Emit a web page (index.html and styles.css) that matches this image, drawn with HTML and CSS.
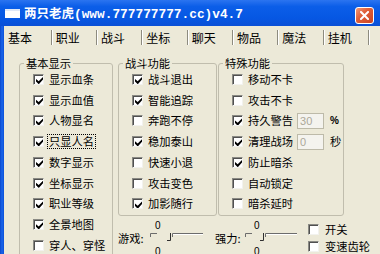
FILE: index.html
```html
<!DOCTYPE html>
<html>
<head>
<meta charset="utf-8">
<link rel="stylesheet" href="styles.css">
</head>
<body>
<div class="window">
  <div class="titlebar">
    <span class="appicon"></span>
    <span class="title"><span class="cjk">两只老虎</span>(www.777777777.cc)v4.7</span>
    <span class="close"><svg width="9" height="9" viewBox="0 0 9 9"><path d="M1 1L8 8M8 1L1 8" stroke="#fff" stroke-width="2" stroke-linecap="square"/></svg></span>
  </div>
  <div class="frame">
    <div class="edge"></div>
    <div class="client">
      <div class="tabs">
        <div class="tab active">基本</div>
        <div class="tab">职业</div>
        <div class="tab">战斗</div>
        <div class="tab">坐标</div>
        <div class="tab">聊天</div>
        <div class="tab">物品</div>
        <div class="tab">魔法</div>
        <div class="tab">挂机</div>
      </div>
      <div class="panel">
        <fieldset class="group g1">
          <legend>基本显示</legend>
          <div class="rows">
            <div class="row"><span class="cb on"></span><span>显示血条</span></div>
            <div class="row"><span class="cb on"></span><span>显示血值</span></div>
            <div class="row"><span class="cb on"></span><span>人物显名</span></div>
            <div class="row"><span class="cb on"></span><span class="focus">只显人名</span></div>
            <div class="row"><span class="cb on"></span><span>数字显示</span></div>
            <div class="row"><span class="cb on"></span><span>坐标显示</span></div>
            <div class="row"><span class="cb on"></span><span>职业等级</span></div>
            <div class="row"><span class="cb on"></span><span>全景地图</span></div>
            <div class="row"><span class="cb"></span><span>穿人、穿怪</span></div>
          </div>
        </fieldset>
        <div class="right">
          <div class="groups">
            <fieldset class="group g2">
              <legend>战斗功能</legend>
              <div class="rows">
                <div class="row"><span class="cb on"></span><span>战斗退出</span></div>
                <div class="row"><span class="cb on"></span><span>智能追踪</span></div>
                <div class="row"><span class="cb"></span><span>奔跑不停</span></div>
                <div class="row"><span class="cb on"></span><span>稳加泰山</span></div>
                <div class="row"><span class="cb"></span><span>快速小退</span></div>
                <div class="row"><span class="cb"></span><span>攻击变色</span></div>
                <div class="row"><span class="cb on"></span><span>加影随行</span></div>
              </div>
            </fieldset>
            <fieldset class="group g3">
              <legend>特殊功能</legend>
              <div class="rows">
                <div class="row"><span class="cb"></span><span>移动不卡</span></div>
                <div class="row"><span class="cb"></span><span>攻击不卡</span></div>
                <div class="row"><span class="cb on"></span><span>持久警告</span><span class="edit">30</span><span class="unit pct">%</span></div>
                <div class="row"><span class="cb on"></span><span>清理战场</span><span class="edit">0</span><span class="unit">秒</span></div>
                <div class="row"><span class="cb on"></span><span>防止暗杀</span></div>
                <div class="row"><span class="cb"></span><span>自动锁定</span></div>
                <div class="row"><span class="cb"></span><span>暗杀延时</span></div>
              </div>
            </fieldset>
          </div>
          <div class="controls">
            <span class="ctl-label l1">游戏:</span>
            <div class="slider s1">
              <div class="val">0</div>
              <svg width="53" height="14" viewBox="0 0 53 14"><path d="M0.5 7V3.5H7" fill="none" stroke="#6c6c6c"/><path d="M17 10.5H20.5V3" fill="none" stroke="#303030"/><path d="M22.5 7V3.5H53" fill="none" stroke="#6c6c6c"/><path d="M23 4.5H53" fill="none" stroke="#fff"/></svg>
              <div class="val">0</div>
            </div>
            <span class="ctl-label l2">强力:</span>
            <div class="slider s2">
              <div class="val">0</div>
              <svg width="52" height="14" viewBox="0 0 52 14"><path d="M0.5 7V3.5H7" fill="none" stroke="#6c6c6c"/><path d="M15 10.5H18.5V3" fill="none" stroke="#303030"/><path d="M20.5 7V3.5H52" fill="none" stroke="#6c6c6c"/><path d="M21 4.5H52" fill="none" stroke="#fff"/></svg>
              <div class="val">0</div>
            </div>
            <div class="checks">
              <div class="row small"><span class="cb"></span><span>开关</span></div>
              <div class="row small"><span class="cb"></span><span>变速齿轮</span></div>
            </div>
          </div>
        </div>
      </div>
    </div>
  </div>
</div>
</body>
</html>
```
FILE: styles.css
```css
* { box-sizing: border-box; margin: 0; padding: 0; }
html, body { width: 380px; height: 254px; overflow: hidden; }
body {
  background: #ECE9D8;
  font-family: "Noto Sans CJK SC", "Noto Sans", sans-serif;
  font-size: 11.25px;
  line-height: 1;
  color: #000;
}
.window { display: flex; flex-direction: column; height: 254px; }

.titlebar {
  flex: none;
  height: 26px;
  display: flex;
  align-items: center;
  padding: 3px 6px 0 5px;
  background: linear-gradient(180deg, #2b74f0 0%, #0b5ee8 25%, #0657e3 70%, #0a4fd6 100%);
  color: #fff;
}
.appicon {
  width: 15px;
  height: 9px;
  margin-top: -3px;
  margin-right: 4px;
  background: #fff;
  border-top: 2px solid #dfe8f8;
}
.title {
  font-family: "Liberation Mono", "Noto Sans CJK SC", monospace;
  font-weight: bold;
  font-size: 12.8px;
  line-height: 14px;
  margin-top: -2px;
  white-space: nowrap;
}
.title .cjk { font-family: "Noto Sans CJK SC", sans-serif; font-size: 12.5px; }
.close {
  margin-left: auto;
  margin-top: 2px;
  width: 19px;
  height: 17px;
  display: flex;
  align-items: center;
  justify-content: center;
  border: 1px solid #fff;
  border-radius: 3px;
  background: linear-gradient(135deg, #f29a78 0%, #e0603a 40%, #cc4421 100%);
}

.frame { flex: 1; display: flex; min-height: 0; overflow: hidden; }
.edge { width: 4px; flex: none; background: linear-gradient(90deg, #0a46cc, #1a66ea 50%, #0b4fd8); }
.client { flex: 1; display: flex; flex-direction: column; overflow: hidden; }

.tabs { display: flex; padding-top: 4px; flex: none; }
.tab {
  width: 45.33px;
  height: 15px;
  padding-left: 4px;
  font-size: 12px;
  line-height: 15px;
  border-right: 1px solid #8d8b7f;
  box-shadow: 1px 0 0 #fff;
  white-space: nowrap;
}
.tab:first-child { width: 47.67px; }

.panel { display: flex; align-items: flex-start; padding: 12px 0 0 15px; }

.group {
  border: 1px solid #c0bdad;
  border-radius: 3px;
  padding: 0 0 1px 0;
  min-width: 0;
}
.group legend {
  margin-left: 4px;
  padding: 0 2px;
  height: 12px;
  line-height: 12px;
}
.g1 { width: 94px; height: 200px; }
.g2 { width: 99px; }
.g3 { width: 126px; }
.rows { padding-left: 13px; }
.row {
  height: 20.75px;
  display: flex;
  align-items: center;
  gap: 5px;
  white-space: nowrap;
}

.cb {
  position: relative;
  flex: none;
  width: 11px;
  height: 11px;
  background: #fff;
  border: 1px solid;
  border-color: #8a8a84 #f2f2ee #f2f2ee #8a8a84;
  box-shadow: inset 1px 1px 0 #505050;
}
.cb.on::after {
  content: "";
  position: absolute;
  left: 2px;
  top: 2px;
  width: 7px;
  height: 7px;
  background: #000;
  clip-path: polygon(0 2px, 0 4.5px, 2.5px 7px, 3px 7px, 7px 2.5px, 7px 0, 2.7px 4.3px);
}
.focus { outline: 1px dotted #000; outline-offset: 1px; }

.edit {
  width: 27px;
  height: 16px;
  margin-left: -1px;
  padding-left: 2px;
  border: 1px solid #bdbaa9;
  background: #f4f3ee;
  color: #aca899;
  font-family: "Liberation Sans", sans-serif;
  font-size: 11px;
  line-height: 14px;
}
.unit { margin-left: 1px; }
.pct { font-family: "Liberation Sans", sans-serif; font-weight: bold; font-size: 10px; }

.right { margin-left: 5px; display: flex; flex-direction: column; }
.groups { display: flex; gap: 1px; }

.controls { display: flex; align-items: flex-start; }
.ctl-label { margin-top: 16px; line-height: 12px; white-space: nowrap; }
.l1 { width: 32px; }
.l2 { width: 30px; margin-left: 12px; }
.slider { margin-top: 5px; display: flex; flex-direction: column; }
.slider svg { display: block; }
.s1 { width: 53px; }
.s2 { width: 52px; }
.val {
  font-family: "Liberation Sans", sans-serif;
  font-size: 10px;
  line-height: 9px;
  height: 9px;
}
.val + svg + .val { margin-top: 3px; }
.s1 .val { padding-left: 5px; }
.s2 .val { padding-left: 9px; }
.checks { margin-left: 11px; margin-top: 5px; }
.row.small { height: 17px; gap: 6px; }
```
